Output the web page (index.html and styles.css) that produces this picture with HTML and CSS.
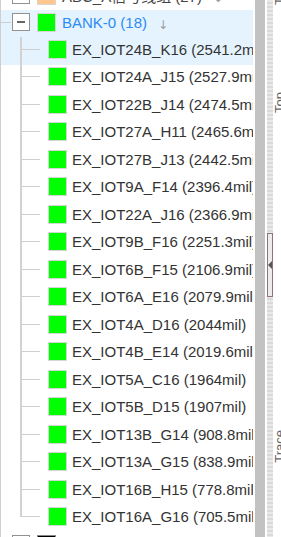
FILE: index.html
```html
<!DOCTYPE html>
<html lang="zh-CN">
<head>
    <meta charset="UTF-8">
    <meta name="viewport" content="width=device-width, initial-scale=1.0">
    <title>Net Tree</title>
    <link rel="stylesheet" href="styles.css">
</head>
<body>
    <div class="app">
        <div class="tree">
            <ul class="nodes">
                <li class="node">
                    <div class="row">
                        <span class="toggle plus"></span>
                        <span class="swatch orange"></span>
                        <span class="group-name">ABC_A信号线组 (27)</span>
                        <span class="sort">↓</span>
                    </div>
                </li>
                <li class="node">
                    <div class="row hot">
                        <span class="toggle"></span>
                        <span class="swatch green"></span>
                        <span class="group-name active">BANK-0 (18)</span>
                        <span class="sort">↓</span>
                    </div>
                    <ul class="children">
                        <li class="leaf hot"><span class="swatch green"></span><span class="net">EX_IOT24B_K16 (2541.2mil)</span></li>
                        <li class="leaf"><span class="swatch green"></span><span class="net">EX_IOT24A_J15 (2527.9mil)</span></li>
                        <li class="leaf"><span class="swatch green"></span><span class="net">EX_IOT22B_J14 (2474.5mil)</span></li>
                        <li class="leaf"><span class="swatch green"></span><span class="net">EX_IOT27A_H11 (2465.6mil)</span></li>
                        <li class="leaf"><span class="swatch green"></span><span class="net">EX_IOT27B_J13 (2442.5mil)</span></li>
                        <li class="leaf"><span class="swatch green"></span><span class="net">EX_IOT9A_F14 (2396.4mil)</span></li>
                        <li class="leaf"><span class="swatch green"></span><span class="net">EX_IOT22A_J16 (2366.9mil)</span></li>
                        <li class="leaf"><span class="swatch green"></span><span class="net">EX_IOT9B_F16 (2251.3mil)</span></li>
                        <li class="leaf"><span class="swatch green"></span><span class="net">EX_IOT6B_F15 (2106.9mil)</span></li>
                        <li class="leaf"><span class="swatch green"></span><span class="net">EX_IOT6A_E16 (2079.9mil)</span></li>
                        <li class="leaf"><span class="swatch green"></span><span class="net">EX_IOT4A_D16 (2044mil)</span></li>
                        <li class="leaf"><span class="swatch green"></span><span class="net">EX_IOT4B_E14 (2019.6mil)</span></li>
                        <li class="leaf"><span class="swatch green"></span><span class="net">EX_IOT5A_C16 (1964mil)</span></li>
                        <li class="leaf"><span class="swatch green"></span><span class="net">EX_IOT5B_D15 (1907mil)</span></li>
                        <li class="leaf"><span class="swatch green"></span><span class="net">EX_IOT13B_G14 (908.8mil)</span></li>
                        <li class="leaf"><span class="swatch green"></span><span class="net">EX_IOT13A_G15 (838.9mil)</span></li>
                        <li class="leaf"><span class="swatch green"></span><span class="net">EX_IOT16B_H15 (778.8mil)</span></li>
                        <li class="leaf"><span class="swatch green"></span><span class="net">EX_IOT16A_G16 (705.5mil)</span></li>
                    </ul>
                </li>
                <li class="node">
                    <div class="row">
                        <span class="toggle plus"></span>
                        <span class="swatch black"></span>
                        <span class="group-name">BANK-1 (22)</span>
                    </div>
                </li>
            </ul>
        </div>

        <div class="scrollbar"></div>

        <div class="splitter">
            <div class="handle"><span class="caret"></span></div>
        </div>

        <div class="side">
            <span class="side-label first">Top</span>
            <span class="side-label second">Top</span>
            <span class="side-label third">Trace</span>
        </div>
    </div>
</body>
</html>
```

FILE: styles.css
```css
* {
    margin: 0;
    padding: 0;
    box-sizing: border-box;
}

body {
    font-family: "Liberation Sans", Arial, "Noto Sans CJK SC", sans-serif;
    background-color: #ffffff;
    color: #333333;
    overflow: hidden;
}

ul {
    list-style: none;
}

.app {
    display: flex;
    height: 537px;
    overflow: hidden;
}

/* Tree panel */
.tree {
    width: 253px;
    margin-right: 2px;
    overflow: hidden;
    flex-shrink: 0;
}

.nodes {
    margin-top: -17px;
    border-left: 1px solid #cfcfcf;
}

.row,
.leaf {
    position: relative;
    display: flex;
    align-items: center;
    white-space: nowrap;
    padding-bottom: 3px;
    font-size: 15px;
}

.row {
    height: 27px;
    padding-left: 11px;
}

/* connector from the root line */
.row::before {
    content: "";
    position: absolute;
    left: 0;
    top: calc(50% - 2px);
    width: 10px;
    height: 1px;
    background-color: #cfcfcf;
}

.hot {
    background-color: #e5f3ff;
}

.toggle {
    position: relative;
    width: 18px;
    height: 18px;
    border: 1px solid #929292;
    background-color: #ffffff;
    margin-right: 7px;
    flex-shrink: 0;
}

.toggle::before {
    content: "";
    position: absolute;
    left: 4px;
    top: 7px;
    width: 8px;
    height: 2px;
    background-color: #666666;
}

.toggle.plus::after {
    content: "";
    position: absolute;
    left: 7px;
    top: 4px;
    width: 2px;
    height: 8px;
    background-color: #666666;
}

.swatch {
    width: 19px;
    height: 19px;
    border: 1px solid #d6d6d6;
    flex-shrink: 0;
}

.swatch.green {
    background-color: #00ff00;
}

.swatch.orange {
    background-color: #ffc68e;
}

.swatch.black {
    background-color: #000000;
    border-color: #888888;
}

.row .swatch {
    margin-right: 6px;
}

.group-name {
    color: #444444;
}

.group-name.active {
    color: #2b8cf2;
}

.sort {
    margin-left: 11px;
    margin-top: 6px;
    font-size: 12px;
    color: #9a9a9a;
    font-family: "DejaVu Sans", sans-serif;
}

/* Children */
.leaf {
    height: 27.5px;
    padding-left: 47px;
}

.leaf .swatch {
    margin-right: 5px;
}

.net {
    color: #333333;
}

.leaf::before {
    content: "";
    position: absolute;
    left: 19px;
    top: 0;
    bottom: 0;
    width: 2px;
    background-color: #d2d2d2;
}

.leaf:last-child::before {
    bottom: auto;
    height: calc(50% - 1px);
}

.leaf::after {
    content: "";
    position: absolute;
    left: 21px;
    top: calc(50% - 2px);
    width: 18px;
    height: 1px;
    background-color: #cfcfcf;
}

/* Scrollbar and splitter */
.scrollbar {
    width: 10px;
    margin-right: 2px;
    background-color: #c2c2c2;
    flex-shrink: 0;
}

.splitter {
    width: 6px;
    flex-shrink: 0;
    background: repeating-linear-gradient(to bottom, #e9e9e9 0 2px, #d9d9d9 2px 4px);
}

.handle {
    margin-top: 233px;
    height: 64px;
    border: 1px solid #8d717e;
    background-color: #ececec;
    display: flex;
    align-items: center;
    justify-content: center;
}

.caret {
    width: 0;
    height: 0;
    border-top: 4px solid transparent;
    border-bottom: 4px solid transparent;
    border-right: 4px solid #555555;
}

/* Right strip */
.side {
    width: 8px;
    flex-shrink: 0;
    overflow: hidden;
    display: flex;
    flex-direction: column;
    align-items: flex-start;
}

.side-label {
    writing-mode: vertical-rl;
    transform: rotate(180deg);
    font-size: 13px;
    line-height: 13px;
    color: #666666;
    white-space: nowrap;
}

.side-label.first {
    margin-top: -16px;
}

.side-label.second {
    margin-top: 87px;
}

.side-label.third {
    margin-top: 317px;
}
```
